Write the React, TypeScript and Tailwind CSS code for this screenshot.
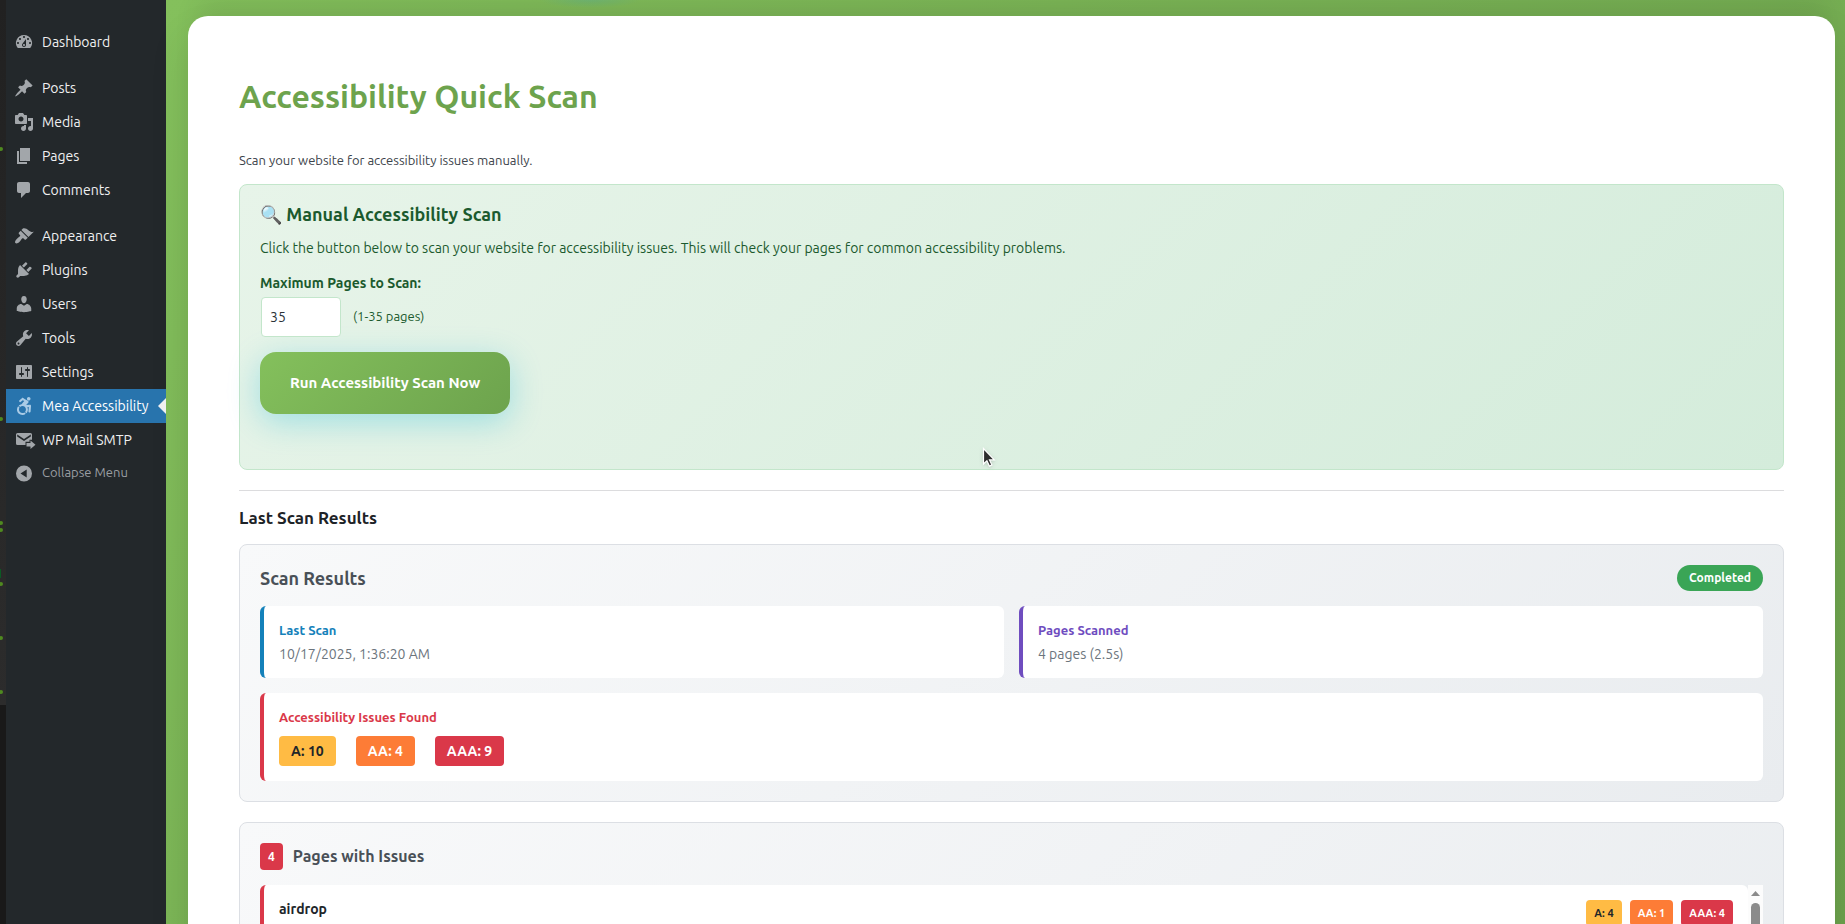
import type { ReactNode } from "react";
import { FaAccessibleIcon } from "react-icons/fa";

type MenuItem = { label: string; icon: ReactNode; active?: boolean };

function Dashicon({ d }: { d: string }) {
  return (
    <svg viewBox="0 0 20 20" className="size-5 fill-current" aria-hidden="true">
      <path d={d} />
    </svg>
  );
}

const menuGroups: MenuItem[][] = [
  [
    {
      label: "Dashboard",
      icon: (
        <Dashicon d="M3.76 16h12.48A7.998 7.998 0 0 0 10 3a7.998 7.998 0 0 0-6.24 13zM10 4c.55 0 1 .45 1 1s-.45 1-1 1-1-.45-1-1 .45-1 1-1zM6 6c.55 0 1 .45 1 1s-.45 1-1 1-1-.45-1-1 .45-1 1-1zm8 0c.55 0 1 .45 1 1s-.45 1-1 1-1-.45-1-1 .45-1 1-1zm-5.37 5.55L12 7v6c0 1.1-.9 2-2 2s-2-.9-2-2c0-.57.24-1.08.63-1.45zM4 10c.55 0 1 .45 1 1s-.45 1-1 1-1-.45-1-1 .45-1 1-1zm12 0c.55 0 1 .45 1 1s-.45 1-1 1-1-.45-1-1 .45-1 1-1zm-5 3c0-.55-.45-1-1-1s-1 .45-1 1 .45 1 1 1 1-.45 1-1z" />
      ),
    },
  ],
  [
    {
      label: "Posts",
      icon: (
        <Dashicon d="M10.44 3.02l1.82-1.82 6.36 6.35-1.83 1.82c-1.05-.68-2.48-.57-3.41.36l-.75.75c-.92.93-1.04 2.35-.35 3.41l-1.83 1.82-2.41-2.41-2.8 2.79c-.42.42-3.38 2.71-3.8 2.29s1.86-3.39 2.28-3.81l2.79-2.79L4.1 9.36l1.83-1.82c1.05.69 2.48.57 3.4-.36l.75-.75c.93-.92 1.05-2.35.36-3.41z" />
      ),
    },
    {
      label: "Media",
      icon: (
        <Dashicon d="M13 11V4c0-.55-.45-1-1-1h-1.67L9 1H5L3.67 3H2c-.55 0-1 .45-1 1v7c0 .55.45 1 1 1h10c.55 0 1-.45 1-1zM7 4.5c1.38 0 2.5 1.12 2.5 2.5S8.38 9.5 7 9.5 4.5 8.38 4.5 7 5.62 4.5 7 4.5zM14 6h5v10.5c0 1.38-1.12 2.5-2.5 2.5S14 17.88 14 16.5s1.12-2.5 2.5-2.5c.17 0 .34.02.5.05V9h-3V6zm-4 8.05V13h2v3.5c0 1.38-1.12 2.5-2.5 2.5S7 17.88 7 16.5 8.12 14 9.5 14c.17 0 .34.02.5.05z" />
      ),
    },
    { label: "Pages", icon: <Dashicon d="M6 15V2h10v13H6zm-1 1h8v2H3V5h2v11z" /> },
    {
      label: "Comments",
      icon: <Dashicon d="M5 2h9c1.1 0 2 .9 2 2v7c0 1.1-.9 2-2 2h-2l-5 5v-5H5c-1.1 0-2-.9-2-2V4c0-1.1.9-2 2-2z" />,
    },
  ],
  [
    {
      label: "Appearance",
      icon: (
        <Dashicon d="M14.48 11.06L7.41 3.99l1.5-1.5c.5-.56 2.3-.47 3.51.32 1.21.8 1.43 1.28 2.91 2.1 1.18.64 2.45 1.26 4.45.85zm-.71.71L6.7 4.7 4.93 6.47c-.39.39-.39 1.02 0 1.41l1.06 1.06c.39.39.39 1.03 0 1.42-.6.6-1.43 1.11-2.21 1.69-.35.26-.7.53-1.01.84C1.43 14.23.4 16.08 1.4 17.07c.99 1 2.84-.03 4.18-1.36.31-.31.58-.66.85-1.02.57-.78 1.08-1.61 1.69-2.21.39-.39 1.02-.39 1.41 0l1.06 1.06c.39.39 1.02.39 1.41 0z" />
      ),
    },
    {
      label: "Plugins",
      icon: (
        <Dashicon d="M13.11 4.36L9.87 7.6 8 5.73l3.24-3.24c.35-.34 1.05-.2 1.56.32.52.51.66 1.21.31 1.55zm-8 1.77l.91-1.12 9.01 9.01-1.19.84c-.71.71-2.63 1.16-3.82 1.16H6.14L4.9 17.26c-.59.59-1.54.59-2.12 0-.59-.58-.59-1.53 0-2.12l1.24-1.24v-3.88c0-1.13.4-3.19 1.09-3.89zm7.26 3.97l3.24-3.24c.34-.35 1.04-.21 1.55.31.52.51.66 1.21.31 1.55l-3.24 3.25z" />
      ),
    },
    {
      label: "Users",
      icon: (
        <Dashicon d="M10 9.25c-2.27 0-2.73-3.44-2.73-3.44C7 4.02 7.82 2 9.97 2c2.16 0 2.98 2.02 2.71 3.81 0 0-.41 3.44-2.68 3.44zm0 2.57L12.72 10c2.39 0 4.52 2.33 4.52 4.53v2.49s-3.65 1.13-7.24 1.13c-3.65 0-7.24-1.13-7.24-1.13v-2.49c0-2.25 1.94-4.48 4.47-4.48z" />
      ),
    },
    {
      label: "Tools",
      icon: (
        <Dashicon d="M16.68 9.77c-1.34 1.34-3.3 1.67-4.95.99l-5.41 6.52c-.99.99-2.59.99-3.58 0s-.99-2.59 0-3.57l6.52-5.42c-.68-1.65-.35-3.61.99-4.95 1.28-1.28 3.12-1.62 4.72-1.06l-2.89 2.89 2.82 2.82 2.86-2.87c.53 1.58.18 3.39-1.08 4.65zM3.81 16.21c.4.39 1.04.39 1.43 0 .4-.4.4-1.04 0-1.43-.39-.4-1.03-.4-1.43 0-.39.39-.39 1.03 0 1.43z" />
      ),
    },
    {
      label: "Settings",
      icon: (
        <Dashicon d="M18 16V4c0-.55-.45-1-1-1H3c-.55 0-1 .45-1 1v12c0 .55.45 1 1 1h14c.55 0 1-.45 1-1zM8 11h1c.55 0 1 .45 1 1s-.45 1-1 1H8v1.5c0 .28-.22.5-.5.5s-.5-.22-.5-.5V13H6c-.55 0-1-.45-1-1s.45-1 1-1h1V5.5c0-.28.22-.5.5-.5s.5.22.5.5V11zm5-2h-1c-.55 0-1-.45-1-1s.45-1 1-1h1V5.5c0-.28.22-.5.5-.5s.5.22.5.5V7h1c.55 0 1 .45 1 1s-.45 1-1 1h-1v5.5c0 .28-.22.5-.5.5s-.5-.22-.5-.5V9z" />
      ),
    },
    { label: "Mea Accessibility", icon: <FaAccessibleIcon className="size-[18px]" />, active: true },
    {
      label: "WP Mail SMTP",
      icon: (
        <svg viewBox="0 0 20 20" className="size-5 overflow-visible fill-current" aria-hidden="true">
          <path d="M3.500 3h13a1.500 1.500 0 0 1 1.500 1.500v5.300h-2.500v2h-4v3.200h-8a1.500 1.500 0 0 1-1.500-1.500v-9A1.500 1.500 0 0 1 3.500 3zM3.200 4.600v1.800l6.800 4.600 6.800-4.600V4.600L10 9.100z" />
          <path d="M12.500 13h4v-2.400l5 4.200-5 4.200v-2.600h-4z" />
        </svg>
      ),
    },
  ],
];

function Sidebar() {
  return (
    <nav aria-label="Admin menu" className="flex w-40 shrink-0 flex-col bg-[#23282b] pt-[25px] text-[#f0f0f1]">
      <div className="flex flex-col gap-3">
        {menuGroups.map((group) => (
          <ul key={group[0].label}>
            {group.map((item) => (
              <li key={item.label} className={item.active ? "relative bg-[#2874ad] text-white" : ""}>
                <a
                  href="#"
                  aria-current={item.active ? "page" : undefined}
                  className="flex h-[34px] items-center text-sm"
                >
                  <span
                    className={
                      item.active
                        ? "flex w-9 shrink-0 items-center justify-center text-[#a9cbe6]"
                        : "flex w-9 shrink-0 items-center justify-center text-[#a2a6aa]"
                    }
                  >
                    {item.icon}
                  </span>
                  <span className="whitespace-nowrap">{item.label}</span>
                </a>
                {item.active && (
                  <span className="absolute right-0 top-1/2 -translate-y-1/2 border-y-8 border-r-8 border-y-transparent border-r-[#f0f0f1]" />
                )}
              </li>
            ))}
          </ul>
        ))}
      </div>
      <button type="button" className="flex h-8 items-center text-left text-[13px] text-[#9a9ea2]">
        <span className="flex w-9 items-center justify-center text-[#a2a6aa]">
          <svg viewBox="0 0 20 20" className="size-5 fill-current" aria-hidden="true">
            <path fillRule="evenodd" d="M10 2.500a8 8 0 1 1 0 16 8 8 0 0 1 0-16zM12.700 6.500L6.500 10.500l6.200 4z" />
          </svg>
        </span>
        Collapse Menu
      </button>
    </nav>
  );
}

/* Sliver of the neighbouring window with its notification dots. */
function BackdropEdge() {
  return (
    <div aria-hidden="true" className="flex w-1.5 shrink-0 flex-col bg-[#191919]">
      <svg width="6" height="705" className="block">
        <defs>
          <linearGradient id="edge" x1="0" y1="0" x2="0" y2="1">
            <stop offset="0" stopColor="#212121" />
            <stop offset="1" stopColor="#2c2c2c" />
          </linearGradient>
        </defs>
        <rect width="6" height="705" fill="url(#edge)" />
        <rect y="569" width="1" height="9" fill="#0b5a24" />
        {[149, 419, 523, 530, 584, 638, 692].map((y) => (
          <circle key={y} cx="1" cy={y} r="2" fill="#4f8a20" />
        ))}
      </svg>
    </div>
  );
}

const levelColors = {
  A: "bg-[#ffbb44] text-[#212529]",
  AA: "bg-[#fd7c36] text-white",
  AAA: "bg-[#da3849] text-white",
};

function LevelBadge({ level, count, small }: { level: "A" | "AA" | "AAA"; count: number; small?: boolean }) {
  const size = small ? "px-2 py-1 text-[11px] leading-[18px]" : "px-3 py-1 text-sm leading-[22px]";
  return (
    <span className={`rounded font-semibold ${size} ${levelColors[level]}`}>
      {level}: {count}
    </span>
  );
}

const panel = "rounded-lg border border-[#dcdfe4] bg-[linear-gradient(135deg,#f8f9fa_0%,#e9ecef_100%)] p-5";

export default function App() {
  return (
    <div className="flex h-screen overflow-hidden font-['Ubuntu','Noto_Sans',sans-serif]">
      <BackdropEdge />
      <Sidebar />
      <main className="min-w-0 flex-1 bg-[radial-gradient(50px_8px_at_424px_0,rgba(90,175,150,0.4),transparent),linear-gradient(135deg,#84c05c_0%,#6da34d_100%)] pl-[22px] pr-2.5 pt-4">
        <div className="min-h-[1600px] rounded-[20px] bg-white px-[51px] pt-[50px] shadow-[0_20px_40px_rgba(0,0,0,0.1),0_-24px_24px_-8px_rgba(0,0,0,0.07)]">
          <h1 className="py-[9px] text-[32px] font-semibold leading-[42px] text-[#6da34d]">Accessibility Quick Scan</h1>
          <p className="mt-6 text-[13px] leading-5 text-[#3c434a]">
            Scan your website for accessibility issues manually.
          </p>

          <section className="mt-3.5 rounded-lg border border-[#c3e6cb] bg-[linear-gradient(135deg,#e7f4e9_0%,#d4ecdb_100%)] px-5 pb-[55px] pt-[17px] text-[#1b5a2e]">
            <h2 className="text-lg font-semibold leading-6">🔍 Manual Accessibility Scan</h2>
            <p className="mt-[11px] text-sm leading-[22px]">
              Click the button below to scan your website for accessibility issues. This will check your pages for
              common accessibility problems.
            </p>
            <label htmlFor="max-pages" className="mt-3 block text-sm font-semibold leading-6">
              Maximum Pages to Scan:
            </label>
            <div className="mt-0.5 flex items-center gap-3 pl-px">
              <input
                id="max-pages"
                type="text"
                inputMode="numeric"
                defaultValue="35"
                className="h-10 w-20 rounded border border-[#c3e6cb] bg-white px-2 text-sm text-[#2c3338]"
              />
              <span className="text-[13px]">(1-35 pages)</span>
            </div>
            <button
              type="button"
              className="mt-[15px] block h-[62px] rounded-2xl bg-[linear-gradient(135deg,#84c05c_0%,#6da34d_100%)] px-[30px] text-[15px] font-semibold text-white shadow-[0_8px_32px_rgba(0,180,216,0.3)]"
            >
              Run Accessibility Scan Now
            </button>
          </section>

          <hr className="mt-5 border-[#dcdcde]" />

          <h2 className="mt-[15px] text-[17px] font-semibold leading-6 text-[#1d2327]">Last Scan Results</h2>

          <section className={`mt-3.5 ${panel}`}>
            <header className="flex items-center justify-between">
              <h3 className="text-lg font-semibold leading-6 text-[#495057]">Scan Results</h3>
              <span className="rounded-full bg-[#3aa556] px-3 py-1 text-xs font-semibold leading-[18px] text-white">
                Completed
              </span>
            </header>
            <div className="mt-[15px] grid grid-cols-2 gap-[15px]">
              <div className="h-[72px] rounded-md border-l-4 border-[#1481ba] bg-white px-[15px] pt-[15px]">
                <h4 className="text-[13px] font-semibold leading-[18px] text-[#1481ba]">Last Scan</h4>
                <p className="mt-1 text-sm leading-[22px] text-[#6c757d]">10/17/2025, 1:36:20 AM</p>
              </div>
              <div className="h-[72px] rounded-md border-l-4 border-[#6f4dbf] bg-white px-[15px] pt-[15px]">
                <h4 className="text-[13px] font-semibold leading-[18px] text-[#6f4dbf]">Pages Scanned</h4>
                <p className="mt-1 text-sm leading-[22px] text-[#6c757d]">4 pages (2.5s)</p>
              </div>
              <div className="col-span-2 rounded-md border-l-4 border-[#da3849] bg-white p-[15px]">
                <h4 className="text-[13px] font-semibold leading-[18px] text-[#da3849]">Accessibility Issues Found</h4>
                <div className="mt-2.5 flex gap-5">
                  <LevelBadge level="A" count={10} />
                  <LevelBadge level="AA" count={4} />
                  <LevelBadge level="AAA" count={9} />
                </div>
              </div>
            </div>
          </section>

          <section className={`mt-5 ${panel}`}>
            <header className="flex items-start gap-2.5">
              <span className="rounded bg-[#da3849] px-2 text-xs font-semibold leading-[27px] text-white">4</span>
              <h3 className="text-base font-semibold leading-[26px] text-[#495057]">Pages with Issues</h3>
            </header>
            <div className="mt-[15px] flex h-[300px]">
              <article className="flex flex-1 items-start justify-between rounded-md border-l-4 border-[#da3849] bg-white p-[15px]">
                <h4 className="text-sm font-semibold leading-[18px] text-[#212529]">airdrop</h4>
                <div className="flex gap-2">
                  <LevelBadge level="A" count={4} small />
                  <LevelBadge level="AA" count={1} small />
                  <LevelBadge level="AAA" count={4} small />
                </div>
              </article>
              <div aria-hidden="true" className="flex w-[15px] flex-col items-center bg-[#fcfcfc] pt-1.5">
                <svg width="9" height="5" className="fill-[#8b8b8b]">
                  <path d="M4.500 0L9 5H0z" />
                </svg>
                <div className="mt-[7px] h-40 w-[9px] rounded-full bg-[#8b8b8b]" />
              </div>
            </div>
          </section>
        </div>
      </main>

      <svg
        aria-hidden="true"
        width="14"
        height="22"
        viewBox="0 0 14 22"
        className="pointer-events-none absolute left-[982px] top-[447px] drop-shadow"
      >
        <path
          d="M1.500 1.500v15.500l3.400-3.200 2.500 5.300 2.500-1.200-2.400-5h4.800z"
          fill="#2e2e2e"
          stroke="#fff"
          strokeWidth="1.200"
        />
      </svg>
    </div>
  );
}
